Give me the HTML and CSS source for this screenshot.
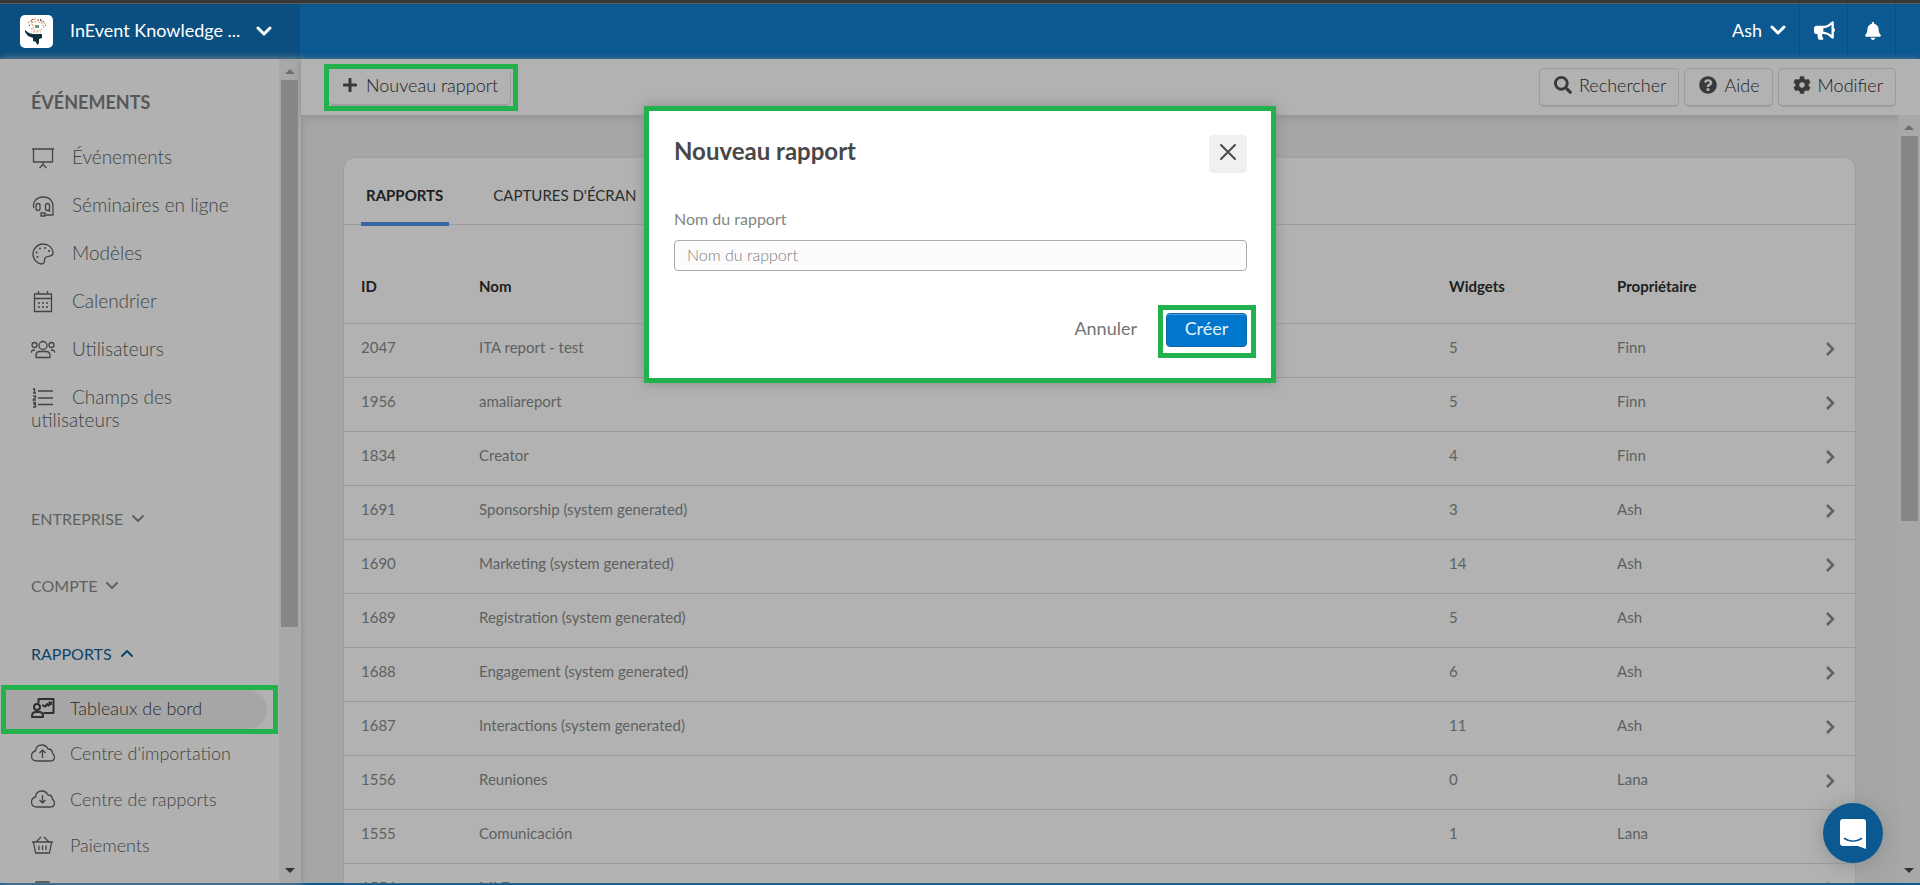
FILE: index.html
```html
<!DOCTYPE html>
<html lang="fr">
<head>
<meta charset="utf-8">
<title>Nouveau rapport</title>
<link rel="stylesheet" href="styles.css">
</head>
<body>
<svg class="defs" aria-hidden="true">
  <symbol id="down" viewBox="0 0 16 16"><path d="M2 5l6 6 6-6" fill="none" stroke="currentColor" stroke-width="3" stroke-linecap="round" stroke-linejoin="round"/></symbol>
  <symbol id="thin-down" viewBox="0 0 14 14"><path d="M2 4l5 5 5-5" fill="none" stroke="currentColor" stroke-width="2" stroke-linecap="round" stroke-linejoin="round"/></symbol>
  <symbol id="thin-up" viewBox="0 0 14 14"><path d="M2 9l5-5 5 5" fill="none" stroke="currentColor" stroke-width="2" stroke-linecap="round" stroke-linejoin="round"/></symbol>
  <symbol id="right" viewBox="0 0 10 14"><path d="M2 1l6 6-6 6" fill="none" stroke="currentColor" stroke-width="2.500"/></symbol>
  <symbol id="tri-up" viewBox="0 0 10 6"><path d="M0 6l5-5 5 5z" fill="currentColor"/></symbol>
  <symbol id="tri-down" viewBox="0 0 10 6"><path d="M0 0h10L5 5z" fill="currentColor"/></symbol>
</svg>
<div class="app">
  <header class="topbar">
    <button class="brand">
      <svg class="logo" viewBox="0 0 33 33" aria-hidden="true">
        <rect width="33" height="33" rx="5" fill="#fff"/>
        <path d="M5 15l4 3 4 1h9v4l-3 1v4l-2 2-1-3-3-1v-3l-5-2-3-4z" fill="#122f3d"/>
        <g fill="none" stroke-width="1" stroke-dasharray="2 1.500">
          <path d="M8 8q3-4 8-4" stroke="#c8603a"/>
          <path d="M17 5q6 0 9 5" stroke="#8b5a3a"/>
          <path d="M9 11q2-5 8-4 6 0 7 5" stroke="#dba070"/>
          <path d="M11 13q3 3 6 3 4 0 7-4" stroke="#d98b62"/>
          <path d="M12 9l2 5m7-7l2 4M13 17h8" stroke="#dda060"/>
          <path d="M20 4l4 3M11 6l3 2" stroke="#3c7a70"/>
        </g>
        <path d="M15 10h4v3h-4z" fill="#6d9b74"/>
        <path d="M12 4h1v1h-1zM20 5h1v1h-1zM25 10h1v1h-1zM9 10h1v1H9z" fill="#a33"/>
      </svg>
      <span class="brand-name">InEvent Knowledge ...</span>
      <svg class="i16" aria-hidden="true"><use href="#down"/></svg>
    </button>
    <nav class="top-actions">
      <button class="user">Ash <svg class="i16" aria-hidden="true"><use href="#down"/></svg></button>
      <button class="top-icon" aria-label="Annonces"><svg class="horn" viewBox="0 0 576 512"><path d="M576 240c0-23.630-12.950-44.040-32-55.120V32.010C544 23.260 537.020 0 512 0c-7.120 0-14.190 2.380-19.980 7.020l-85.030 68.030C364.280 109.190 310.660 128 256 128H64c-35.350 0-64 28.650-64 64v96c0 35.350 28.650 64 64 64h33.700c-1.390 10.480-2.180 21.140-2.180 32 0 39.770 9.260 77.350 25.560 110.940 5.190 10.690 16.520 17.060 28.400 17.060h74.280c26.050 0 41.690-29.840 25.900-50.560-16.400-21.520-26.150-48.360-26.150-77.440 0-11.110 1.620-21.790 4.410-32H256c54.660 0 108.280 18.810 150.980 52.950l85.030 68.030a32.023 32.023 0 0 0 19.980 7.020c24.920 0 32-22.780 32-32V295.130C563.050 284.040 576 263.630 576 240zm-96 141.420l-33.050-26.440C392.950 311.780 325.120 288 256 288v-96c69.120 0 136.950-23.780 190.950-66.980L480 98.580v282.840z"/></svg></button>
      <button class="top-icon" aria-label="Notifications"><svg class="bell" viewBox="0 0 448 512"><path d="M224 512c35.320 0 63.970-28.650 63.970-64H160.030c0 35.350 28.650 64 63.970 64zm215.390-149.710c-19.320-20.760-55.470-51.990-55.470-154.290 0-77.700-54.480-139.900-127.940-155.160V32c0-17.670-14.320-32-31.980-32s-31.980 14.330-31.980 32v20.840C118.560 68.100 64.080 130.300 64.080 208c0 102.300-36.150 133.530-55.470 154.290-6 6.450-8.660 14.160-8.610 21.710.11 16.400 12.980 32 32.100 32h383.800c19.120 0 32-15.600 32.100-32 .05-7.550-2.610-15.270-8.610-21.710z"/></svg></button>
      <span class="top-end"></span>
    </nav>
  </header>
  <div class="body">
    <aside class="sidebar">
      <nav class="menu">
        <h2 class="menu-title">ÉVÉNEMENTS</h2>
        <a class="item" href="#"><svg class="ico" viewBox="0 0 24 24"><path d="M1 3h22M2.500 3v13h19V3M12 16v3M8.500 22l3.500-3.500 3.500 3.500"/></svg>Événements</a>
        <a class="item" href="#"><svg class="ico" viewBox="0 0 24 24"><path d="M3 14C1 9 5 3 12 3s10 4 10 10v8h-8"/><rect x="5" y="9.500" width="4" height="7" rx="2"/><rect x="14.500" y="9.500" width="4" height="7" rx="2"/><path d="M10 19h4v3h-4zM18.500 16v2"/></svg>Séminaires en ligne</a>
        <a class="item" href="#"><svg class="ico" viewBox="0 0 24 24"><path d="M22 11c0-5-4.500-9-10-9S2 6.500 2 12c0 6 5 10 9 10 3 0 2-3 3-6s8 0 8-5z"/><path class="dots" d="M6.500 15v.01M5.500 10.500v.01M9 6.500v.01M14 6v.01M18 9v.01"/></svg>Modèles</a>
        <a class="item" href="#"><svg class="ico" viewBox="0 0 24 24"><path d="M3.500 4h17v17.500h-17zM3.500 8.500h17M7.500 1v3M16.500 1v3"/><path class="dots" d="M8 13v.01M12 13v.01M16 13v.01M8 17v.01M12 17v.01M16 17v.01"/></svg>Calendrier</a>
        <a class="item" href="#"><svg class="ico" viewBox="0 0 24 24"><circle cx="12" cy="7.500" r="4"/><circle cx="3.500" cy="7" r="2.500"/><circle cx="20.500" cy="7" r="2.500"/><path d="M5 19.500v-2q0-4 4-4h6q4 0 4 4v2zM0 15q0-3 4-3M24 15q0-3-4-3"/></svg>Utilisateurs</a>
        <a class="item" href="#"><svg class="ico" viewBox="0 0 24 24"><path d="M7 5h15M7 12h15M7 18.500h15M2 3.500l1.500-1V7M2 7h3M2 10h2.500v1.500L2 14h3M2 16.500h2.500L3 18.500h1.500V21H2"/></svg>Champs des utilisateurs</a>
        <button class="group group-first">ENTREPRISE <svg class="i14"><use href="#thin-down"/></svg></button>
        <button class="group">COMPTE <svg class="i14"><use href="#thin-down"/></svg></button>
        <button class="group open">RAPPORTS <svg class="i14"><use href="#thin-up"/></svg></button>
        <div class="mark mark-item"><a class="sub active" href="#"><svg class="ico" viewBox="0 0 24 24"><path d="M7.500 7V3h15v14h-10"/><circle cx="6" cy="11" r="3"/><path d="M1 21v-1q0-4 4-4h3q4 0 4 4v1zM12 8.500v1l2.500 1L16 8l1.500 1.500L20 6.500M17.500 6.500H20V9"/></svg>Tableaux de bord</a></div>
        <a class="sub" href="#"><svg class="ico" viewBox="0 0 24 24"><path d="M6 20q-5.500 0-5.500-5 0-4 4-5Q5 4 11 4q4 0 6 4 4.500 0 4.500 4.500 2 1 2 3.500 0 4-4.500 4zM11.500 17V9M8.500 12l3-3 3 3"/></svg>Centre d'importation</a>
        <a class="sub" href="#"><svg class="ico" viewBox="0 0 24 24"><path d="M6 20q-5.500 0-5.500-5 0-4 4-5Q5 4 11 4q4 0 6 4 4.500 0 4.500 4.500 2 1 2 3.500 0 4-4.500 4zM11.500 8v8M8.500 13l3 3 3-3"/></svg>Centre de rapports</a>
        <a class="sub" href="#"><svg class="ico" viewBox="0 0 24 24"><path d="M1 9h21M2.500 9l2 11h14l2-11M5 9l5-5M18 9l-5-5M8 12.500V17M11.500 12.500V17M15 12.500V17"/></svg>Paiements</a>
        <a class="sub" href="#" aria-label="Suivant"><svg class="ico" viewBox="0 0 24 24"><path d="M5 3h13v18H5z"/></svg></a>
      </nav>
      <div class="scroll scroll-side"><svg class="tri"><use href="#tri-up"/></svg><span class="thumb thumb-side"></span><svg class="tri tri-end"><use href="#tri-down"/></svg></div>
    </aside>
    <main class="main">
      <div class="toolbar">
        <div class="mark mark-tool"><button class="tool tool-new"><svg class="i16" viewBox="0 0 448 512"><path d="M416 208H272V64c0-17.670-14.330-32-32-32h-32c-17.670 0-32 14.330-32 32v144H32c-17.670 0-32 14.330-32 32v32c0 17.670 14.330 32 32 32h144v144c0 17.670 14.330 32 32 32h32c17.670 0 32-14.330 32-32V304h144c17.670 0 32-14.330 32-32v-32c0-17.670-14.330-32-32-32z"/></svg>Nouveau rapport</button></div>
        <div class="tools">
          <button class="tool"><svg class="i18" viewBox="0 0 512 512"><path d="M505 442.700L405.300 343c-4.500-4.500-10.600-7-17-7H372c27.600-35.300 44-79.700 44-128C416 93.100 322.900 0 208 0S0 93.100 0 208s93.100 208 208 208c48.300 0 92.700-16.400 128-44v16.300c0 6.400 2.500 12.500 7 17l99.700 99.700c9.400 9.400 24.600 9.400 33.900 0l28.300-28.300c9.400-9.400 9.400-24.600.1-34zM208 336c-70.700 0-128-57.200-128-128 0-70.700 57.200-128 128-128 70.700 0 128 57.200 128 128 0 70.700-57.200 128-128 128z"/></svg>Rechercher</button>
          <button class="tool"><svg class="i18" viewBox="0 0 512 512"><path d="M504 256c0 136.997-111.043 248-248 248S8 392.997 8 256C8 119.083 119.043 8 256 8s248 111.083 248 248zM262.655 90c-54.497 0-89.255 22.957-116.549 63.758-3.536 5.286-2.353 12.415 2.715 16.258l34.699 26.310c5.205 3.947 12.621 3.008 16.665-2.122 17.864-22.658 30.113-35.797 57.303-35.797 20.429 0 45.698 13.148 45.698 32.958 0 14.976-12.363 22.667-32.534 33.976C247.128 238.528 216 254.941 216 296v4c0 6.627 5.373 12 12 12h56c6.627 0 12-5.373 12-12v-1.333c0-28.462 83.186-29.647 83.186-106.667 0-58.002-60.165-102-116.531-102zM256 338c-25.365 0-46 20.635-46 46 0 25.364 20.635 46 46 46s46-20.636 46-46c0-25.365-20.635-46-46-46z"/></svg>Aide</button>
          <button class="tool"><svg class="i18" viewBox="0 0 512 512"><path d="M487.400 315.700l-42.600-24.600c4.300-23.200 4.300-47 0-70.200l42.600-24.600c4.900-2.800 7.100-8.600 5.500-14-11.100-35.600-30-67.800-54.700-94.600-3.800-4.100-10-5.100-14.800-2.300L380.800 110c-17.900-15.400-38.500-27.300-60.800-35.100V25.800c0-5.600-3.900-10.500-9.400-11.700-36.700-8.200-74.300-7.800-109.200 0-5.500 1.200-9.400 6.100-9.400 11.700V75c-22.200 7.900-42.800 19.800-60.800 35.100L88.700 85.500c-4.900-2.800-11-1.900-14.800 2.300-24.700 26.700-43.600 58.900-54.700 94.600-1.700 5.400.6 11.200 5.500 14L67.300 221c-4.300 23.200-4.300 47 0 70.200l-42.600 24.600c-4.900 2.800-7.100 8.600-5.500 14 11.100 35.600 30 67.800 54.700 94.600 3.800 4.100 10 5.100 14.800 2.300l42.600-24.600c17.900 15.400 38.500 27.300 60.800 35.100v49.200c0 5.600 3.900 10.500 9.400 11.700 36.700 8.200 74.300 7.800 109.200 0 5.500-1.200 9.400-6.100 9.400-11.700v-49.200c22.200-7.900 42.800-19.800 60.800-35.100l42.600 24.600c4.900 2.800 11 1.900 14.800-2.300 24.700-26.700 43.600-58.900 54.700-94.600 1.500-5.500-.7-11.300-5.600-14.100zM256 336c-44.100 0-80-35.900-80-80s35.900-80 80-80 80 35.900 80 80-35.900 80-80 80z"/></svg>Modifier</button>
        </div>
      </div>
      <div class="content">
        <section class="card">
          <div class="tabs"><button class="tab selected">RAPPORTS</button><button class="tab">CAPTURES D'ÉCRAN</button></div>
          <table class="reports">
            <colgroup><col class="c-id"><col><col class="c-widgets"><col class="c-owner"><col class="c-go"></colgroup>
            <thead><tr><th>ID</th><th>Nom</th><th>Widgets</th><th>Propriétaire</th><th></th></tr></thead>
            <tbody>
              <tr><td>2047</td><td>ITA report - test</td><td>5</td><td>Finn</td><td class="go"><svg class="chev"><use href="#right"/></svg></td></tr>
              <tr><td>1956</td><td>amaliareport</td><td>5</td><td>Finn</td><td class="go"><svg class="chev"><use href="#right"/></svg></td></tr>
              <tr><td>1834</td><td>Creator</td><td>4</td><td>Finn</td><td class="go"><svg class="chev"><use href="#right"/></svg></td></tr>
              <tr><td>1691</td><td>Sponsorship (system generated)</td><td>3</td><td>Ash</td><td class="go"><svg class="chev"><use href="#right"/></svg></td></tr>
              <tr><td>1690</td><td>Marketing (system generated)</td><td>14</td><td>Ash</td><td class="go"><svg class="chev"><use href="#right"/></svg></td></tr>
              <tr><td>1689</td><td>Registration (system generated)</td><td>5</td><td>Ash</td><td class="go"><svg class="chev"><use href="#right"/></svg></td></tr>
              <tr><td>1688</td><td>Engagement (system generated)</td><td>6</td><td>Ash</td><td class="go"><svg class="chev"><use href="#right"/></svg></td></tr>
              <tr><td>1687</td><td>Interactions (system generated)</td><td>11</td><td>Ash</td><td class="go"><svg class="chev"><use href="#right"/></svg></td></tr>
              <tr><td>1556</td><td>Reuniones</td><td>0</td><td>Lana</td><td class="go"><svg class="chev"><use href="#right"/></svg></td></tr>
              <tr><td>1555</td><td>Comunicación</td><td>1</td><td>Lana</td><td class="go"><svg class="chev"><use href="#right"/></svg></td></tr>
              <tr><td>1554</td><td>MLE</td><td></td><td></td><td class="go"><svg class="chev"><use href="#right"/></svg></td></tr>
            </tbody>
          </table>
        </section>
        <div class="scroll"><svg class="tri"><use href="#tri-up"/></svg><span class="thumb thumb-main"></span><svg class="tri tri-end"><use href="#tri-down"/></svg></div>
      </div>
    </main>
  </div>
</div>
<div class="overlay">
  <form class="modal" role="dialog" aria-labelledby="modal-title">
    <div class="modal-head">
      <h1 class="modal-title" id="modal-title">Nouveau rapport</h1>
      <button class="close" type="button" aria-label="Fermer"><svg class="i18" viewBox="0 0 18 18"><path d="M2 2l14 14M16 2L2 16" fill="none" stroke="currentColor" stroke-width="2" stroke-linecap="round"/></svg></button>
    </div>
    <label class="label" for="name">Nom du rapport</label>
    <input class="field" id="name" type="text" placeholder="Nom du rapport">
    <div class="modal-foot">
      <button class="cancel" type="button">Annuler</button>
      <div class="mark mark-create"><button class="create" type="button">Créer</button></div>
    </div>
  </form>
</div>
<button class="chat" aria-label="Messagerie"><svg class="chat-icon" viewBox="0 0 26 30"><path d="M3 0h20q3 0 3 3v27l-8-3H3q-3 0-3-3V3q0-3 3-3z" fill="#fff"/><path d="M4.500 19.500q8.500 5.500 17 0" fill="none" stroke="#0c5890" stroke-width="1.500" stroke-linecap="round"/></svg></button>
</body>
</html>
```
FILE: styles.css
```css
* { box-sizing: border-box; }
body {
  margin: 0;
  height: 100vh;
  overflow: hidden;
  font-family: Lato, "Open Sans", sans-serif;
  font-size: 18px;
  color: #5d6160;
  background: #a5a7a6;
}
button {
  font: inherit;
  color: inherit;
  background: none;
  border: 0;
  padding: 0;
  margin: 0;
}
a { color: inherit; text-decoration: none; }
svg { fill: currentColor; flex: none; }
.defs { display: none; }
.i14 { width: 14px; height: 14px; }
.i16 { width: 16px; height: 16px; }
.i18 { width: 18px; height: 18px; }

.app {
  height: 100vh;
  display: flex;
  flex-direction: column;
  border-top: 3px solid #393837;
  border-bottom: 2px solid #0c5890;
}

/* Top bar */
.topbar {
  flex: none;
  height: 56px;
  display: flex;
  justify-content: space-between;
  color: #fff;
  background: #0c5890;
  border-top: 1px solid #5c6064;
}
.brand {
  width: 300px;
  padding: 0 28px 1px 20px;
  display: flex;
  align-items: center;
  background: #0b4e80;
}
.logo { width: 33px; height: 33px; }
.brand-name {
  margin-left: 17px;
  margin-right: auto;
  padding-bottom: 2px;
}
.top-actions { display: flex; padding-right: 24px; }
.user {
  display: flex;
  align-items: center;
  gap: 8px;
  padding: 0 13px 3px 0;
}
.top-icon {
  width: 48px;
  padding: 0 0 2px 2px;
  display: flex;
  align-items: center;
  justify-content: center;
  border-left: 1px solid #0b4d7e;
}
.top-end { border-left: 1px solid #0b4d7e; }
.horn { width: 21px; height: 19px; }
.bell { width: 16px; height: 18px; }

.body { flex: 1; min-height: 0; display: flex; }

/* Sidebar */
.sidebar {
  flex: none;
  width: 301px;
  display: flex;
  overflow: hidden;
  background: #b1b1b1;
  box-shadow: 1px 0 8px #8e9090;
}
.menu { flex: 1; padding-left: 31px; }
.menu-title {
  margin: 32px 0 0;
  font-size: 18px;
  line-height: 22px;
  font-weight: 700;
  color: #565858;
}
.item {
  display: block;
  width: 200px;
  margin-top: 25px;
  font-size: 19px;
  font-weight: 300;
  line-height: 23px;
  color: #404444;
}
.menu-title + .item { margin-top: 32px; }
.ico {
  width: 24px;
  height: 24px;
  fill: none;
  stroke: #424545;
  stroke-width: 1.3;
  stroke-linejoin: round;
}
.dots { stroke-width: 2; stroke-linecap: round; }
.item .ico { margin: -6px 17px -4px 0; vertical-align: middle; }
.group {
  display: flex;
  align-items: center;
  gap: 8px;
  margin-top: 48px;
  font-size: 16px;
  line-height: 19px;
}
.group-first { margin-top: 78px; }
.group.open { margin-top: 49px; color: #0e4468; }
.sub {
  display: flex;
  align-items: center;
  gap: 15px;
  height: 46px;
  font-weight: 300;
  color: #404444;
}
.mark { border: 5px solid #22b14c; }
.mark-item { margin: 22px 1px -4px -30px; height: 49px; }
.sub.active {
  height: 39px;
  margin-right: 6px;
  padding: 0 0 4px 25px;
  border-radius: 0 20px 20px 0;
  color: #2a2c2c;
  background: #a6a6a6;
}
.active .ico { stroke: #2c2f2f; stroke-width: 2; }

/* Drawn scroll bars */
.scroll {
  flex: none;
  width: 22px;
  padding: 9px 0;
  display: flex;
  flex-direction: column;
  align-items: center;
  background: #a7a8a8;
}
.scroll-side { padding-right: 1px; }
.tri { width: 10px; height: 6px; color: #6d6e6e; }
.tri-end { margin-top: auto; color: #303131; }
.thumb { width: 17px; margin-top: 6px; background: #868686; }
.thumb-side { height: 547px; }
.thumb-main { height: 385px; }

/* Toolbar */
.main { flex: 1; min-width: 0; display: flex; flex-direction: column; }
.toolbar {
  flex: none;
  height: 56px;
  padding: 0 24px 0 23px;
  display: flex;
  justify-content: space-between;
  align-items: center;
  font-weight: 300;
  color: #1e2020;
  background: #b2b2b2;
  box-shadow: 0 2px 8px #8e9090;
}
.toolbar svg { color: #383a3a; }
.tools { display: flex; gap: 5px; }
.tool {
  height: 39px;
  padding: 0 12px 4px 14px;
  display: flex;
  align-items: center;
  gap: 7px;
  border: 1px solid #9c9c9c;
  border-bottom-width: 2px;
  border-radius: 5px;
}
.mark-tool { height: 47px; padding-right: 2px; }
.tool-new {
  height: 37px;
  padding: 0 12px 3px 13px;
  gap: 8px;
  border-left: 0;
  border-top: 0;
}

/* Reports */
.content { flex: 1; min-height: 0; display: flex; }
.card {
  flex: 1;
  min-width: 0;
  margin: 43px 43px 0;
  border-radius: 10px 10px 0 0;
  background: #b2b2b2;
  box-shadow: 0 0 2px #8b8b8b;
  overflow: hidden;
}
.tabs {
  height: 67px;
  padding: 0 17px;
  display: flex;
  gap: 39px;
  border-bottom: 1px solid #9b9c9c;
}
.tab {
  height: 68px;
  padding: 10px 6px 0 5px;
  font-size: 15px;
  color: #2a2c2c;
  border-bottom: 4px solid transparent;
}
.tab.selected { font-weight: 700; border-color: #3566a0; color: #1e2020; }
.reports {
  width: 100%;
  table-layout: fixed;
  border-collapse: collapse;
  font-size: 15px;
}
.c-id { width: 118px; }
.c-widgets { width: 168px; }
.c-owner { width: 163px; }
.c-go { width: 92px; }
.reports th {
  height: 98px;
  padding: 24px 0 0 17px;
  text-align: left;
  color: #1e2020;
  border-bottom: 1px solid #999a9a;
}
.reports td {
  height: 54px;
  padding: 0 0 6px 17px;
  border-bottom: 1px solid #999a9a;
}
.reports .go { padding-right: 20px; text-align: right; }
.chev { width: 10px; height: 14px; vertical-align: middle; }

/* Dialog */
.overlay {
  position: absolute;
  inset: 0;
  padding-top: 106px;
  display: flex;
  justify-content: center;
  align-items: flex-start;
}
.modal {
  width: 632px;
  padding: 24px 24px 20px 25px;
  border: 5px solid #22b14c;
  background: #fff;
  box-shadow: 0 0 12px #8a8a8a;
}
.modal-head { display: flex; justify-content: space-between; }
.modal-title {
  margin: 0;
  font-size: 24px;
  line-height: 32px;
  font-weight: 700;
  color: #484848;
}
.close {
  width: 38px;
  height: 38px;
  padding-bottom: 4px;
  display: flex;
  align-items: center;
  justify-content: center;
  border-radius: 4px;
  color: #4c4c4c;
  background: #f0f0f0;
}
.label {
  display: block;
  margin-top: 36px;
  font-size: 16px;
  line-height: 20px;
  color: #818686;
}
.field {
  width: 100%;
  height: 31px;
  margin-top: 11px;
  padding: 0 12px 3px;
  display: block;
  font: 300 16px Lato, "Open Sans", sans-serif;
  border: 1px solid #a4adad;
  border-radius: 4px;
  background: #fcfcfc;
}
.field::placeholder { color: #787c7c; }
.modal-foot {
  display: flex;
  justify-content: flex-end;
  align-items: flex-start;
  gap: 21px;
  margin: 34px -9px 0 0;
}
.cancel { margin-top: 12px; color: #747474; }
.mark-create { padding: 3px 4px 6px 3px; }
.create {
  width: 81px;
  height: 34px;
  padding-bottom: 4px;
  display: block;
  border: 1px solid #0b66ae;
  border-radius: 4px;
  color: #e5f3fc;
  background: #0077cc;
  box-shadow: inset 0 1px #4ea2dc;
}
.chat {
  position: absolute;
  right: 37px;
  bottom: 22px;
  width: 60px;
  height: 60px;
  padding-top: 1px;
  display: flex;
  align-items: center;
  justify-content: center;
  border-radius: 50%;
  background: #0c5890;
  box-shadow: 0 2px 20px #8c8e8e;
}
.chat-icon { width: 26px; height: 30px; }
```
